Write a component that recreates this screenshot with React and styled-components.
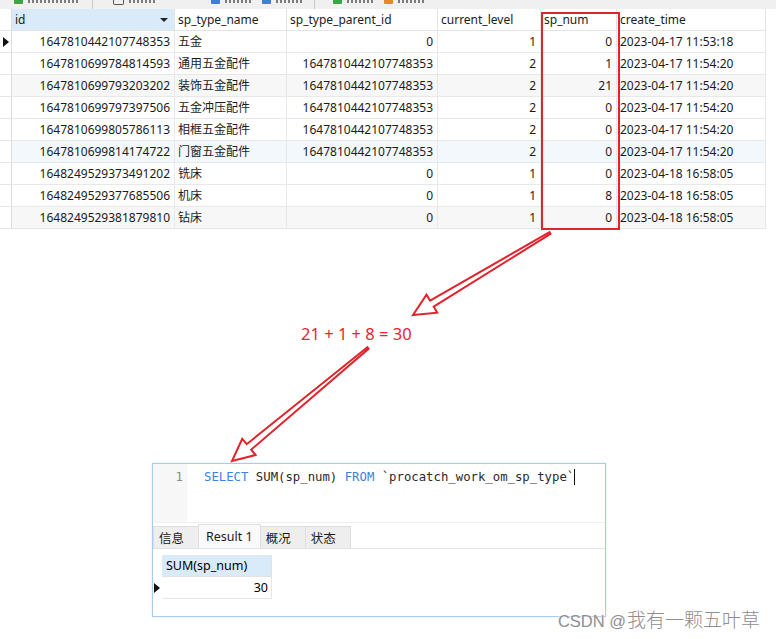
import styled, { createGlobalStyle } from "styled-components";

const GlobalStyle = createGlobalStyle`
  html, body {
    margin: 0;
    padding: 0;
    background: #ffffff;
  }
  body {
    font-family: "Noto Sans", "Noto Sans CJK SC", sans-serif;
  }
`;

const columns = [
  { key: "id", title: "id", width: 163, align: "right", sorted: true },
  { key: "name", title: "sp_type_name", width: 112, align: "left" },
  { key: "parent", title: "sp_type_parent_id", width: 151, align: "right" },
  { key: "level", title: "current_level", width: 103, align: "right" },
  { key: "num", title: "sp_num", width: 76, align: "right" },
  { key: "time", title: "create_time", width: 149, align: "left" },
];

const rows = [
  { id: "1647810442107748353", name: "五金", parent: "0", level: "1", num: "0", time: "2023-04-17 11:53:18", current: true },
  { id: "1647810699784814593", name: "通用五金配件", parent: "1647810442107748353", level: "2", num: "1", time: "2023-04-17 11:54:20" },
  { id: "1647810699793203202", name: "装饰五金配件", parent: "1647810442107748353", level: "2", num: "21", time: "2023-04-17 11:54:20", tone: "#f7f7f7" },
  { id: "1647810699797397506", name: "五金冲压配件", parent: "1647810442107748353", level: "2", num: "0", time: "2023-04-17 11:54:20" },
  { id: "1647810699805786113", name: "相框五金配件", parent: "1647810442107748353", level: "2", num: "0", time: "2023-04-17 11:54:20" },
  { id: "1647810699814174722", name: "门窗五金配件", parent: "1647810442107748353", level: "2", num: "0", time: "2023-04-17 11:54:20", tone: "#f3f8fd" },
  { id: "1648249529373491202", name: "铣床", parent: "0", level: "1", num: "0", time: "2023-04-18 16:58:05" },
  { id: "1648249529377685506", name: "机床", parent: "0", level: "1", num: "8", time: "2023-04-18 16:58:05" },
  { id: "1648249529381879810", name: "钻床", parent: "0", level: "1", num: "0", time: "2023-04-18 16:58:05", tone: "#f7f7f7" },
];

// hollow, hand-drawn style arrow from tail to tip
const arrowPoints = (tx, ty, px, py) => {
  const len = Math.hypot(px - tx, py - ty);
  const ux = (px - tx) / len;
  const uy = (py - ty) / len;
  const nx = -uy;
  const ny = ux;
  const L = 22, wt = 1, ws = 3.5, wh = 10.5;
  const bx = px - ux * L;
  const by = py - uy * L;
  const pts = [
    [tx + nx * wt, ty + ny * wt],
    [bx + nx * ws, by + ny * ws],
    [bx + nx * wh, by + ny * wh],
    [px, py],
    [bx - nx * wh, by - ny * wh],
    [bx - nx * ws, by - ny * ws],
    [tx - nx * wt, ty - ny * wt],
  ];
  return pts.map(([x, y]) => `${x.toFixed(1)},${y.toFixed(1)}`).join(" ");
};

const App = () => {
  return (
    <Page>
      <GlobalStyle />
      {/* toolbar is scrolled away, only the lower edge of its buttons shows */}
      <Toolbar>
        <ToolGroup>
          <ToolIcon color="#3aa745" />
          <ToolStub w={52} />
        </ToolGroup>
        <ToolDivider />
        <ToolGroup>
          <ToolBox />
          <ToolStub w={26} />
          <ToolSpacer />
          <ToolIcon color="#3b7fd6" />
          <ToolStub w={26} />
          <ToolIcon color="#3b7fd6" />
          <ToolStub w={26} />
        </ToolGroup>
        <ToolDivider />
        <ToolGroup>
          <ToolIcon color="#3aa745" />
          <ToolStub w={26} />
          <ToolIcon color="#e5892a" />
          <ToolStub w={26} />
        </ToolGroup>
      </Toolbar>

      <Grid>
        <HeaderRow>
          <Indicator />
          {columns.map((c) => (
            <HeaderCell key={c.key} width={c.width} sorted={c.sorted}>
              <span>{c.title}</span>
              {c.sorted && <SortCaret />}
            </HeaderCell>
          ))}
        </HeaderRow>
        {rows.map((r) => (
          <DataRow key={r.id} tone={r.tone}>
            <Indicator>{r.current && <RowMarker />}</Indicator>
            {columns.map((c) => (
              <Cell key={c.key} width={c.width} align={c.align}>
                {r[c.key]}
              </Cell>
            ))}
          </DataRow>
        ))}
        <Highlight />
      </Grid>

      <Annotation>
        <Formula>21 + 1 + 8 = 30</Formula>
      </Annotation>

      <QueryWindow>
        <Editor>
          <Gutter>1</Gutter>
          <Code>
            <Keyword>SELECT</Keyword> SUM(sp_num) <Keyword>FROM</Keyword> `procatch_work_om_sp_type`
            <Caret />
          </Code>
        </Editor>
        <TabBar>
          <Tab>信息</Tab>
          <Tab active>Result 1</Tab>
          <Tab>概况</Tab>
          <Tab>状态</Tab>
        </TabBar>
        <ResultArea>
          <ResultRow>
            <ResultIndicator />
            <ResultHead>SUM(sp_num)</ResultHead>
          </ResultRow>
          <ResultRow>
            <ResultIndicator>
              <RowMarker />
            </ResultIndicator>
            <ResultCell>30</ResultCell>
          </ResultRow>
        </ResultArea>
      </QueryWindow>

      <Arrows width="776" height="639" viewBox="0 0 776 639">
        <polygon points={arrowPoints(550, 233, 413, 315)} />
        <polygon points={arrowPoints(368, 348, 232, 461)} />
      </Arrows>

      <Watermark>
        <Latin>CSDN @</Latin>我有一颗五叶草
      </Watermark>
    </Page>
  );
};

export default App;

const Page = styled.div`
  position: relative;
  width: 776px;
  height: 639px;
  overflow: hidden;
  background: #ffffff;
`;

const Toolbar = styled.div`
  display: flex;
  align-items: flex-start;
  height: 9px;
  overflow: hidden;
  background: #f0f0f0;
  padding-left: 8px;
  box-sizing: border-box;
`;

const ToolGroup = styled.div`
  display: flex;
  align-items: flex-start;
  gap: 5px;
`;

const ToolIcon = styled.div`
  width: 9px;
  height: 4px;
  background: ${(p) => p.color};
  border-radius: 0 0 1px 1px;
  margin-left: 6px;
`;

const ToolBox = styled.div`
  width: 9px;
  height: 4px;
  border: 1px solid #555;
  border-top: none;
  border-radius: 0 0 2px 2px;
  margin-left: 8px;
`;

const ToolSpacer = styled.div`
  width: 40px;
`;

const ToolStub = styled.div`
  width: ${(p) => p.w}px;
  height: 3px;
  background: repeating-linear-gradient(90deg, #4a4a4a 0 2px, transparent 2px 4px);
  opacity: 0.7;
`;

const ToolDivider = styled.div`
  width: 1px;
  background: #c8c8c8;
  margin: 0 12px;
  align-self: stretch;
`;

const Grid = styled.div`
  position: relative;
  width: 766px;
  font-size: 12px;
  color: #1b1b1b;
`;

const HeaderRow = styled.div`
  display: flex;
  height: 22px;
  background: #ffffff;
`;

const DataRow = styled.div`
  display: flex;
  height: 22px;
  background: ${(p) => p.tone || "#ffffff"};
`;

const Indicator = styled.div`
  width: 12px;
  flex: none;
  box-sizing: border-box;
  border-right: 1px solid #dcdcdc;
  border-bottom: 1px solid #e6e6e6;
  background: #ffffff;
  display: flex;
  align-items: center;
  padding-left: 3px;
`;

const RowMarker = styled.div`
  width: 0;
  height: 0;
  border-top: 5px solid transparent;
  border-bottom: 5px solid transparent;
  border-left: 6px solid #111;
`;

const HeaderCell = styled.div`
  width: ${(p) => p.width}px;
  flex: none;
  box-sizing: border-box;
  display: flex;
  align-items: center;
  justify-content: space-between;
  padding: 0 6px 0 3px;
  border-right: 1px solid #e3e3e3;
  border-bottom: 1px solid #e3e3e3;
  background: ${(p) => (p.sorted ? "#d9eaf8" : "#ffffff")};
  white-space: nowrap;
  overflow: hidden;
`;

const SortCaret = styled.div`
  width: 0;
  height: 0;
  border-left: 4px solid transparent;
  border-right: 4px solid transparent;
  border-top: 4px solid #222;
`;

const Cell = styled.div`
  width: ${(p) => p.width}px;
  flex: none;
  box-sizing: border-box;
  line-height: 21px;
  padding: 0 4px 0 3px;
  text-align: ${(p) => p.align};
  border-right: 1px solid #e8e8e8;
  border-bottom: 1px solid #e8e8e8;
  white-space: nowrap;
  overflow: hidden;
`;

const Highlight = styled.div`
  position: absolute;
  left: 541px;
  top: 3px;
  width: 79px;
  height: 218px;
  box-sizing: border-box;
  border: 2px solid #e3222b;
  pointer-events: none;
`;

const Annotation = styled.div`
  height: 234px;
  box-sizing: border-box;
  padding: 94px 0 0 301px;
`;

const Formula = styled.div`
  font-size: 16.5px;
  line-height: 22px;
  color: #e8262d;
`;

const QueryWindow = styled.div`
  margin-left: 152px;
  width: 454px;
  height: 154px;
  box-sizing: border-box;
  border: 1px solid #a9cbf0;
  box-shadow: 0 0 2px #cfe2f8;
  display: flex;
  flex-direction: column;
  background: #ffffff;
`;

const Editor = styled.div`
  display: flex;
  height: 58px;
  border-bottom: 1px solid #f0f0f0;
`;

const Gutter = styled.div`
  width: 34px;
  box-sizing: border-box;
  background: #f7f7f7;
  text-align: right;
  padding: 4px 4px 0 0;
  font-family: "DejaVu Sans Mono", monospace;
  font-size: 12.3px;
  line-height: 18px;
  color: #8c8c8c;
`;

const Code = styled.div`
  display: flex;
  align-items: flex-start;
  padding: 4px 0 0 17px;
  font-family: "DejaVu Sans Mono", monospace;
  font-size: 12.3px;
  line-height: 18px;
  color: #2a2a2a;
  white-space: pre;
`;

const Keyword = styled.span`
  color: #3c82e0;
`;

const Caret = styled.span`
  display: inline-block;
  width: 1px;
  height: 16px;
  margin-top: 1px;
  background: #111;
`;

const TabBar = styled.div`
  display: flex;
  align-items: flex-end;
  height: 26px;
  box-sizing: border-box;
  background: #ffffff;
  border-bottom: 1px solid #e2e2e2;
  padding-top: 3px;
`;

const Tab = styled.div`
  height: ${(p) => (p.active ? "24px" : "22px")};
  box-sizing: border-box;
  padding: 0 ${(p) => (p.active ? "7px" : "5px")};
  min-width: ${(p) => (p.active ? "60px" : "46px")};
  display: flex;
  align-items: center;
  font-size: 12.5px;
  color: #1b1b1b;
  background: ${(p) => (p.active ? "#fafafa" : "#eeeeee")};
  border: 1px solid #dedede;
  border-bottom: none;
  margin-right: -1px;
`;

const ResultArea = styled.div`
  flex: 1;
  padding-top: 6px;
  background: #ffffff;
`;

const ResultRow = styled.div`
  display: flex;
  height: 22px;
`;

const ResultIndicator = styled.div`
  width: 9px;
  flex: none;
  display: flex;
  align-items: center;
  padding-left: 1px;
  box-sizing: border-box;
`;

const ResultHead = styled.div`
  width: 110px;
  box-sizing: border-box;
  padding-left: 4px;
  line-height: 21px;
  font-size: 12.5px;
  background: #d9eaf8;
  border-bottom: 1px solid #e2e2e2;
  border-right: 1px solid #e2e2e2;
`;

const ResultCell = styled.div`
  width: 110px;
  box-sizing: border-box;
  padding-right: 3px;
  text-align: right;
  line-height: 21px;
  font-size: 12.5px;
  border-bottom: 1px solid #e6e6e6;
  border-right: 1px solid #e6e6e6;
`;

const Arrows = styled.svg`
  position: absolute;
  left: 0;
  top: 0;
  pointer-events: none;

  polygon {
    fill: #ffffff;
    stroke: #e3222b;
    stroke-width: 2;
    stroke-linejoin: miter;
  }
`;

const Watermark = styled.div`
  position: absolute;
  right: 16px;
  bottom: 5px;
  font-size: 19px;
  line-height: 26px;
  font-weight: 300;
  color: #8e8e8e;
  text-shadow: 0 0 2px #ffffff, 0 0 2px #ffffff;
  font-family: "Noto Sans CJK SC", sans-serif;
`;

const Latin = styled.span`
  font-family: "Liberation Sans", sans-serif;
  font-size: 16.5px;
  font-weight: 400;
  margin-right: 1px;
`;
